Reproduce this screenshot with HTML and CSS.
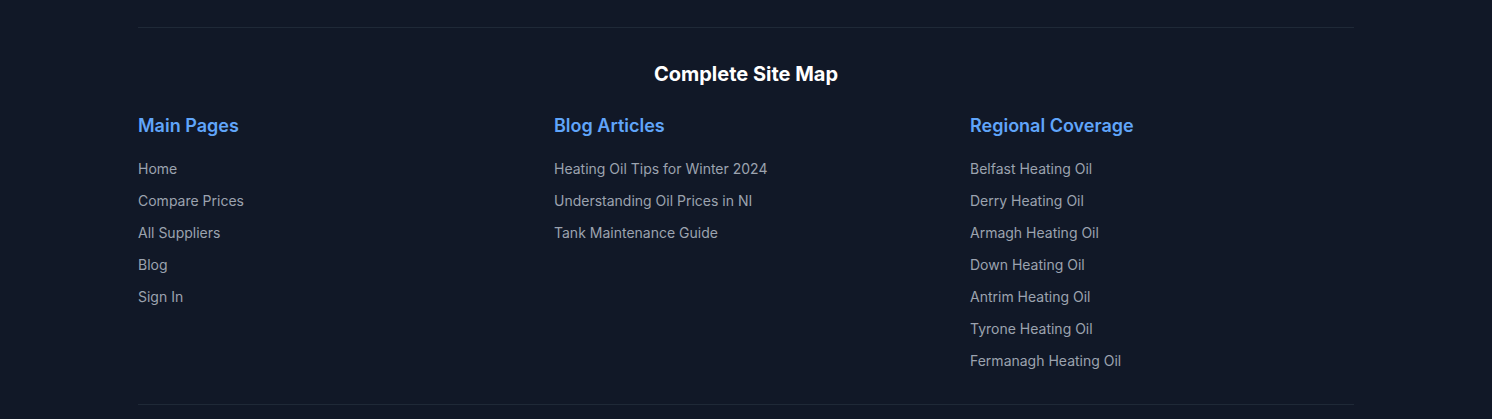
FILE: index.html
```html
<!DOCTYPE html>
<html lang="en">
<head>
<meta charset="utf-8">
<title>Complete Site Map</title>
<link rel="stylesheet" href="styles.css">
</head>
<body>
<footer class="footer">
  <div class="container">
    <section class="sitemap">
      <h2 class="sitemap-title">Complete Site Map</h2>
      <div class="columns">
        <div class="column">
          <h3 class="column-title">Main Pages</h3>
          <ul class="links">
            <li><a href="#">Home</a></li>
            <li><a href="#">Compare Prices</a></li>
            <li><a href="#">All Suppliers</a></li>
            <li><a href="#">Blog</a></li>
            <li><a href="#">Sign In</a></li>
          </ul>
        </div>
        <div class="column">
          <h3 class="column-title">Blog Articles</h3>
          <ul class="links">
            <li><a href="#">Heating Oil Tips for Winter 2024</a></li>
            <li><a href="#">Understanding Oil Prices in NI</a></li>
            <li><a href="#">Tank Maintenance Guide</a></li>
          </ul>
        </div>
        <div class="column">
          <h3 class="column-title">Regional Coverage</h3>
          <ul class="links">
            <li><a href="#">Belfast Heating Oil</a></li>
            <li><a href="#">Derry Heating Oil</a></li>
            <li><a href="#">Armagh Heating Oil</a></li>
            <li><a href="#">Down Heating Oil</a></li>
            <li><a href="#">Antrim Heating Oil</a></li>
            <li><a href="#">Tyrone Heating Oil</a></li>
            <li><a href="#">Fermanagh Heating Oil</a></li>
          </ul>
        </div>
      </div>
    </section>
    <div class="bottom"></div>
  </div>
</footer>
</body>
</html>
```
FILE: styles.css
```css
* { box-sizing: border-box; }
html, body { margin: 0; padding: 0; }
body {
  background: #111827;
  font-family: Inter, "Noto Sans", sans-serif;
  color: #9ca3af;
  height: 419px;
  overflow: hidden;
}
.footer { padding-top: 27px; }
.container {
  max-width: 1280px;
  margin: 0 auto;
  padding: 0 32px;
}
.sitemap {
  border-top: 1px solid #1f2937;
  padding: 32px 0 33px;
}
.sitemap-title {
  margin: 0 0 24px;
  text-align: center;
  color: #ffffff;
  font-size: 20px;
  line-height: 28px;
  font-weight: 700;
}
.columns {
  display: grid;
  grid-template-columns: repeat(3, 1fr);
  gap: 32px;
}
.column-title {
  margin: 0 0 19px;
  color: #60a5fa;
  font-size: 18px;
  line-height: 28px;
  font-weight: 600;
}
.links {
  list-style: none;
  margin: 0;
  padding: 0;
  display: flex;
  flex-direction: column;
  gap: 12px;
}
.links li {
  font-size: 14px;
  line-height: 20px;
}
.links a {
  color: #9ca3af;
  text-decoration: none;
}
.bottom {
  border-top: 1px solid #1f2937;
  height: 20px;
}
```
